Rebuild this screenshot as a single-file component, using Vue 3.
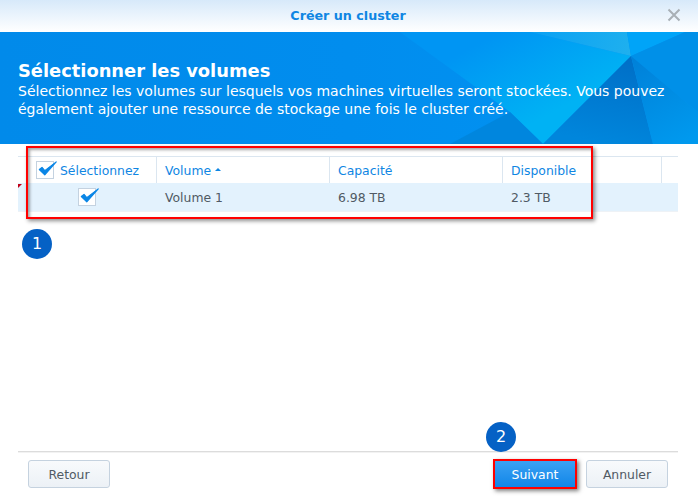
<script setup>
const columns = [
  { key: 'select', label: 'Sélectionnez', width: 139 },
  { key: 'volume', label: 'Volume', width: 173, sorted: true },
  { key: 'capacity', label: 'Capacité', width: 173 },
  { key: 'free', label: 'Disponible', width: 159 },
  { key: 'rest', label: '', width: 16 }
]
const row = { volume: 'Volume 1', capacity: '6.98 TB', free: '2.3 TB' }
</script>

<template>
  <div class="dialog">
    <header class="titlebar">
      <span class="title">Créer un cluster</span>
      <svg class="close" width="14" height="14" viewBox="0 0 14 14" aria-hidden="true">
        <path d="M1.5 1.5 12.5 12.5M12.5 1.5 1.5 12.5" stroke="#a9b0b6" stroke-width="2" fill="none" />
      </svg>
    </header>

    <section class="banner">
      <svg class="facets" width="698" height="112" viewBox="0 0 698 112" aria-hidden="true">
        <defs>
          <linearGradient id="glow" gradientUnits="userSpaceOnUse" x1="500" y1="0" x2="545" y2="85">
            <stop offset="0" stop-color="#0095f3" />
            <stop offset="1" stop-color="#00b2f4" />
          </linearGradient>
          <linearGradient id="light" gradientUnits="userSpaceOnUse" x1="540" y1="0" x2="630" y2="24">
            <stop offset="0" stop-color="#0ca2f3" />
            <stop offset="1" stop-color="#1fb0ee" />
          </linearGradient>
          <linearGradient id="dark" gradientUnits="userSpaceOnUse" x1="625" y1="30" x2="610" y2="112">
            <stop offset="0" stop-color="#0070c8" />
            <stop offset="1" stop-color="#0086dc" />
          </linearGradient>
          <linearGradient id="right" gradientUnits="userSpaceOnUse" x1="632" y1="24" x2="680" y2="112">
            <stop offset="0" stop-color="#0080d8" />
            <stop offset="1" stop-color="#0099ee" />
          </linearGradient>
        </defs>
        <polygon points="400,0 530,0 631,24 543,112 510,80" fill="url(#glow)" />
        <polygon points="530,0 627,0 631,24" fill="url(#light)" />
        <polygon points="627,0 685,0 631,24" fill="#00a4f8" />
        <polygon points="685,0 698,0 698,80 631,24" fill="#0090e8" />
        <polygon points="631,24 543,112 653,112" fill="url(#dark)" />
        <polygon points="631,24 698,80 698,112 653,112" fill="url(#right)" />
        <polygon points="510,80 543,112 450,112" fill="#0086de" />
      </svg>
      <div class="banner-text">
        <h1>Sélectionner les volumes</h1>
        <p>Sélectionnez les volumes sur lesquels vos machines virtuelles seront stockées. Vous pouvez également ajouter une ressource de stockage une fois le cluster créé.</p>
      </div>
    </section>

    <main class="content">
      <div class="grid">
        <div class="grid-head">
          <div
            v-for="col in columns"
            :key="col.key"
            class="head-cell"
            :style="{ width: col.width + 'px' }"
          >
            <span v-if="col.key === 'select'" class="check head-check">
              <svg width="23" height="23" viewBox="0 0 21 21" aria-hidden="true">
                <path d="M3 10.5 8 15.5 18.5 3.5 8 11.5 5.5 8.5Z" fill="#0a86e6" stroke="#0a86e6" stroke-width="1" stroke-linejoin="round" />
              </svg>
            </span>
            <span>{{ col.label }}</span>
            <span v-if="col.sorted" class="sort-arrow"></span>
          </div>
        </div>
        <div class="grid-row">
          <div class="cell cell-check" :style="{ width: columns[0].width + 'px' }">
            <span class="check">
              <svg width="23" height="23" viewBox="0 0 21 21" aria-hidden="true">
                <path d="M3 10.5 8 15.5 18.5 3.5 8 11.5 5.5 8.5Z" fill="#0a86e6" stroke="#0a86e6" stroke-width="1" stroke-linejoin="round" />
              </svg>
            </span>
          </div>
          <div class="cell" :style="{ width: columns[1].width + 'px' }">{{ row.volume }}</div>
          <div class="cell" :style="{ width: columns[2].width + 'px' }">{{ row.capacity }}</div>
          <div class="cell" :style="{ width: columns[3].width + 'px' }">{{ row.free }}</div>
        </div>
      </div>
      <span class="corner-mark"></span>
    </main>

    <footer class="footer">
      <button class="btn" type="button">Retour</button>
      <div class="footer-right">
        <button class="btn btn-primary" type="button">Suivant</button>
        <button class="btn" type="button">Annuler</button>
      </div>
    </footer>

    <div class="highlight highlight-table"></div>
    <span class="badge badge-one">1</span>
    <span class="badge badge-two">2</span>
  </div>
</template>

<style>
html, body { margin: 0; background: #fff; }
</style>

<style scoped>
.dialog {
  position: relative;
  width: 698px;
  height: 496px;
  display: flex;
  flex-direction: column;
  overflow: hidden;
  background: #fff;
  font-family: "DejaVu Sans", Verdana, sans-serif;
  font-size: 12px;
}
.titlebar {
  flex: none;
  height: 32px;
  display: flex;
  align-items: center;
  justify-content: center;
  position: relative;
  background: linear-gradient(#d7e9fa, #ffffff);
}
.title {
  color: #0f86e3;
  font-size: 12.7px;
  font-weight: 700;
  margin-top: -2px;
  margin-left: -2px;
}
.close {
  position: absolute;
  right: 17px;
  top: 8px;
}
.banner {
  flex: none;
  position: relative;
  height: 112px;
  background: linear-gradient(90deg, #018aea, #018dee 50%, #0194f2);
  overflow: hidden;
}
.facets {
  position: absolute;
  inset: 0;
}
.banner-text {
  position: relative;
  padding: 28px 18px 0;
  color: #fff;
}
.banner-text h1 {
  margin: 0;
  font-size: 17.85px;
  line-height: 22px;
  font-weight: 700;
}
.banner-text p {
  margin: 0;
  font-size: 14px;
  line-height: 18px;
}
.content {
  flex: 1;
  position: relative;
  padding: 12px 18px 0;
}
.grid {
  width: 660px;
  border-top: 1px solid #dbe6f0;
}
.grid-head {
  display: flex;
  height: 26px;
}
.head-cell {
  box-sizing: border-box;
  display: flex;
  align-items: center;
  padding-left: 8px;
  border-right: 1px solid #dbe6f0;
  color: #0f86e3;
  font-size: 12.4px;
  white-space: nowrap;
}
.head-cell:first-child { padding-left: 18px; }
.head-cell:last-child { border-right: 0; }
.sort-arrow {
  margin-left: 4px;
  margin-top: -1px;
  width: 0;
  height: 0;
  border-left: 3.5px solid transparent;
  border-right: 3.5px solid transparent;
  border-bottom: 3.5px solid #0f86e3;
}
.grid-row {
  display: flex;
  height: 29px;
  background: #e3f2fd;
  border-bottom: 1px solid #eef2f6;
  box-sizing: border-box;
}
.cell {
  box-sizing: border-box;
  display: flex;
  align-items: center;
  padding: 1px 0 0 8px;
  color: #505a64;
  font-size: 12.4px;
}
.cell-check {
  padding: 0 0 0 60px;
}
.check {
  position: relative;
  display: block;
  flex: none;
  width: 18px;
  height: 18px;
  border: 1px solid #c4d2e0;
  background: #fff;
  box-sizing: border-box;
}
.check svg {
  position: absolute;
  left: -1px;
  top: -4px;
}
.head-check {
  margin-right: 6px;
}
.corner-mark {
  position: absolute;
  left: 18px;
  top: 40px;
  width: 0;
  height: 0;
  border-top: 4px solid #c00018;
  border-right: 4px solid transparent;
}
.footer {
  flex: none;
  margin: 0 20px 0 18px;
  height: 45px;
  border-top: 1px solid #dcdcdc;
  box-shadow: inset 0 1px 0 #f2f2f2;
  display: flex;
  justify-content: space-between;
  box-sizing: border-box;
  padding: 8px 10px 0 10px;
}
.footer-right {
  display: flex;
  gap: 9px;
}
.btn {
  box-sizing: border-box;
  height: 28px;
  width: 82px;
  padding: 0;
  border: 1px solid #c5d2df;
  border-radius: 3px;
  background: linear-gradient(#f8fafc, #ecf1f6);
  color: #505a64;
  font-family: inherit;
  font-size: 12.4px;
}
.btn-primary {
  width: 84px;
  height: 30px;
  margin-top: -1px;
  border: 2px solid #ff0000;
  border-radius: 0;
  background: linear-gradient(#3ba1f3, #1186e8);
  color: #fff;
  box-shadow: 2px 2px 4px rgba(0, 0, 0, 0.5);
}
.highlight {
  position: absolute;
  box-sizing: border-box;
  pointer-events: none;
}
.highlight-table {
  left: 26px;
  top: 146px;
  width: 567px;
  height: 73px;
  border: 2px solid #ff0000;
  box-shadow: 2px 2px 4px rgba(0, 0, 0, 0.45), inset 2px 2px 3px rgba(0, 0, 0, 0.35);
}
.badge {
  position: absolute;
  width: 30px;
  height: 30px;
  border-radius: 50%;
  background: #0561c5;
  color: #fff;
  font-size: 16px;
  line-height: 30px;
  text-align: center;
}
.badge-one { left: 22px; top: 229px; }
.badge-two { left: 486px; top: 422px; }
</style>
